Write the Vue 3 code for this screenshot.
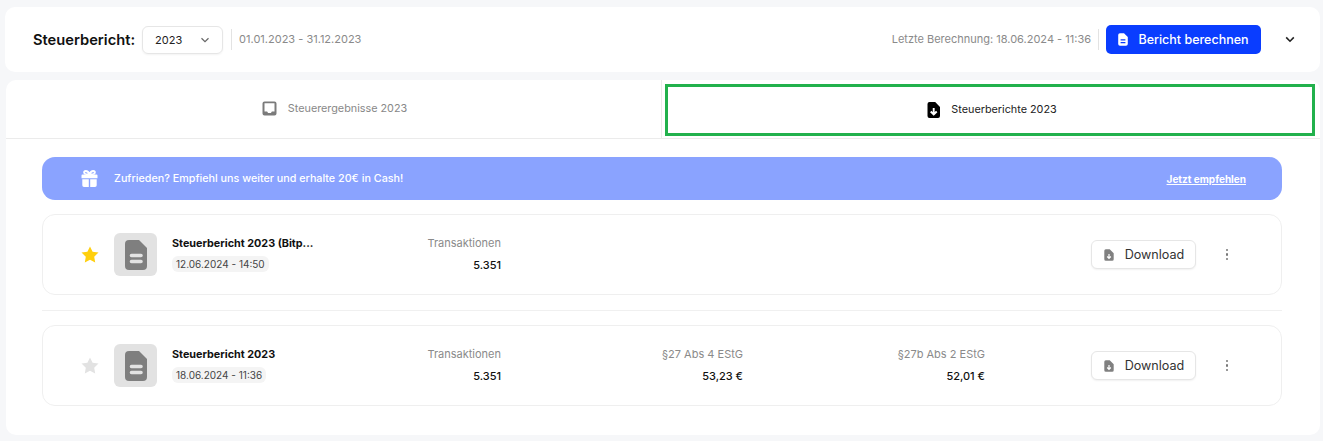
<template>
  <div class="page">
    <header class="topbar">
      <div class="topbar__left">
        <span class="topbar__title">Steuerbericht:</span>
        <div class="year-select">
          <span>2023</span>
          <svg width="10" height="6" viewBox="0 0 10 6"><path d="M1.500 1.200 5 4.600l3.500-3.400" fill="none" stroke="#666" stroke-width="1.200" /></svg>
        </div>
        <span class="topbar__sep"></span>
        <span class="topbar__range">01.01.2023 - 31.12.2023</span>
      </div>
      <div class="topbar__right">
        <span class="topbar__range">Letzte Berechnung: 18.06.2024 - 11:36</span>
        <span class="topbar__sep topbar__sep--right"></span>
        <button class="btn-primary">
          <svg width="10" height="13" viewBox="0 0 10 13"><path d="M2 .2h4L9.800 4v7a1.800 1.800 0 0 1-1.800 1.800H2A1.800 1.800 0 0 1 .2 11V2A1.800 1.800 0 0 1 2 .2Z" fill="#fff" /><path d="M2.600 6.800h4.800M2.600 9.600h4.800" stroke="#0a3dff" stroke-width="1.200" /></svg>
          Bericht berechnen
        </button>
        <svg class="topbar__caret" width="10" height="7" viewBox="0 0 10 7"><path d="M1.200 1.400 5 5.200l3.800-3.800" fill="none" stroke="#222" stroke-width="1.600" /></svg>
      </div>
    </header>

    <main class="panel">
      <nav class="tabs">
        <div class="tab">
          <svg width="15" height="15" viewBox="0 0 15 15"><path fill-rule="evenodd" d="M2.500.5h10a2 2 0 0 1 2 2v10a2 2 0 0 1-2 2h-10a2 2 0 0 1-2-2v-10a2 2 0 0 1 2-2Zm0 1.700v8.300h2.600l1 1.600h2.800l1-1.600h2.600V2.200Z" fill="#7b7b7b" /></svg>
          <span>Steuerergebnisse 2023</span>
        </div>
        <div class="tab tab--active">
          <svg width="13" height="16" viewBox="0 0 13 16"><path d="M2.500 0h5.700L13 5v9a2 2 0 0 1-2 2H2.500a2 2 0 0 1-2-2V2a2 2 0 0 1 2-2Z" fill="#000" /><path d="M6.700 6v6.500M3.700 9.500l3 3 3-3" fill="none" stroke="#fff" stroke-width="1.900" /></svg>
          <span>Steuerberichte 2023</span>
        </div>
      </nav>

      <section class="content">
        <div class="banner">
          <div class="banner__msg">
            <svg width="17" height="17" viewBox="0 0 17 17" fill="#fff"><path d="M.5 5.500a1 1 0 0 1 1-1h14a1 1 0 0 1 1 1v2.800H.5ZM1.300 9.200h6.500V17H3a1.700 1.700 0 0 1-1.700-1.700ZM9.200 9.200h6.500v6.100A1.700 1.700 0 0 1 14 17H9.200Z" /><path d="M8.500 4.500C7.500 1.800 6 1 4.800 1 3.400 1 2.900 2 3.300 3c.4 1 2 1.500 5.200 1.500Zm0 0c1-2.700 2.500-3.500 3.700-3.500 1.400 0 1.900 1 1.500 2-.4 1-2 1.500-5.200 1.500Z" fill="none" stroke="#fff" stroke-width="2" /></svg>
            <span>Zufrieden? Empfiehl uns weiter und erhalte 20€ in Cash!</span>
          </div>
          <a class="banner__link">Jetzt empfehlen</a>
        </div>

        <template v-for="(report, i) in reports" :key="report.date">
          <hr v-if="i > 0" class="divider" />
          <article class="report">
            <svg class="star" width="18" height="17" viewBox="0 0 18 17"><path d="M9 .5l2.600 5.300 5.900.8-4.300 4.100 1 5.800L9 13.800l-5.200 2.700 1-5.800L.5 6.600l5.900-.8Z" :fill="report.starred ? '#ffcf0d' : '#e2e2e2'" stroke-linejoin="round" /></svg>
            <div class="thumb">
              <svg width="22" height="30" viewBox="0 0 22 30"><path d="M4 0h10l8 8v18a4 4 0 0 1-4 4H4a4 4 0 0 1-4-4V4a4 4 0 0 1 4-4Z" fill="#7f7f7f" /><path d="M6.500 15.500h9.500M6.500 21.500h9.500" stroke="#e2e2e2" stroke-width="3.600" stroke-linecap="round" /></svg>
            </div>
            <div class="report__main">
              <div class="report__name">{{ report.name }}</div>
              <span class="report__date">{{ report.date }}</span>
            </div>
            <div class="stat stat--first">
              <div class="stat__label">Transaktionen</div>
              <div class="stat__value">5.351</div>
            </div>
            <div class="stat stat--other">
              <template v-if="report.abs4">
                <div class="stat__label">§27 Abs 4 EStG</div>
                <div class="stat__value">{{ report.abs4 }}</div>
              </template>
            </div>
            <div class="stat stat--other">
              <template v-if="report.abs2">
                <div class="stat__label">§27b Abs 2 EStG</div>
                <div class="stat__value">{{ report.abs2 }}</div>
              </template>
            </div>
            <button class="btn-download">
              <svg width="10" height="12" viewBox="0 0 10 12"><path d="M1.800.3h3.900L9.700 4.300v6a1.500 1.500 0 0 1-1.500 1.500H1.800A1.500 1.500 0 0 1 .3 10.300V1.800A1.500 1.500 0 0 1 1.800.3Z" fill="#808080" /><path d="M5 5v4.200M3.200 7.500 5 9.300l1.800-1.800" fill="none" stroke="#fff" stroke-width="1.200" /></svg>
              <span>Download</span>
            </button>
            <div class="dots"><i></i><i></i><i></i></div>
          </article>
        </template>
      </section>
    </main>
  </div>
</template>

<script setup>
const reports = [
  { name: 'Steuerbericht 2023 (Bitp...', date: '12.06.2024 - 14:50', starred: true },
  { name: 'Steuerbericht 2023', date: '18.06.2024 - 11:36', starred: false, abs4: '53,23 €', abs2: '52,01 €' },
]
</script>

<style>
html, body {
  margin: 0;
  background: #f6f7f9;
}
</style>

<style scoped>
.page {
  height: 441px;
  box-sizing: border-box;
  padding: 7px 3px 6px 5px;
  font-family: Inter, "Liberation Sans", sans-serif;
  overflow: hidden;
}

.topbar {
  height: 65px;
  box-sizing: border-box;
  background: #fff;
  border-radius: 10px;
  padding: 0 25px 0 28px;
  display: flex;
  align-items: center;
  justify-content: space-between;
}
.topbar__left, .topbar__right {
  display: flex;
  align-items: center;
}
.topbar__title {
  font-size: 14.700px;
  font-weight: 600;
  color: #111;
  margin-top: 1px;
}
.year-select {
  width: 81px;
  height: 28px;
  box-sizing: border-box;
  margin-left: 7px;
  padding: 0 12px;
  border: 1px solid #e6e6e6;
  border-radius: 6px;
  display: flex;
  align-items: center;
  justify-content: space-between;
  font-size: 11px;
  color: #222;
  box-shadow: 0 1px 2px rgba(0, 0, 0, .05);
}
.topbar__sep {
  width: 1px;
  height: 21px;
  background: #e3e3e3;
  margin: 0 7px 0 8px;
}
.topbar__sep--right {
  margin: 0 7px;
}
.topbar__range {
  font-size: 11px;
  color: #8a8a8a;
  position: relative;
  top: -1px;
}
.btn-primary {
  width: 155px;
  height: 29px;
  border: 0;
  border-radius: 5px;
  background: #0a3dff;
  color: #fff;
  font: 500 12.500px Inter, "Liberation Sans", sans-serif;
  display: flex;
  align-items: center;
  justify-content: center;
  gap: 10px;
  padding: 0;
}
.topbar__caret {
  margin-left: 24px;
}

.panel {
  margin: 8px 0 0 1px;
  height: 355px;
  background: #fff;
  border-radius: 10px;
  overflow: hidden;
}
.tabs {
  display: grid;
  grid-template-columns: 656px 1fr;
  height: 59px;
  box-sizing: border-box;
  border-bottom: 1px solid #ebebeb;
}
.tab {
  display: flex;
  align-items: center;
  justify-content: center;
  gap: 11px;
  font-size: 10.800px;
  color: #888;
  border-right: 1px solid #ebebeb;
  padding: 0 0 2px 2px;
}
.tab--active {
  color: #222;
  border: 3px solid #22b14c;
  margin: 4px 5px 2px 3px;
  padding: 0 0 1px 4px;
}

.content {
  padding: 18px 38px 0 36px;
}
.banner {
  height: 43px;
  background: #8aa3ff;
  border-radius: 13px;
  display: flex;
  align-items: center;
  justify-content: space-between;
  padding: 0 36px 0 39px;
  color: #fff;
}
.banner__msg {
  display: flex;
  align-items: center;
  gap: 16px;
  font-size: 10.750px;
  font-weight: 500;
}
.banner__msg span {
  margin-bottom: 1px;
}
.banner__link {
  font-size: 10px;
  font-weight: 700;
  text-decoration: underline;
}

.divider {
  border: 0;
  border-top: 1px solid #f0f0f0;
  margin: 15px 0 14px;
}
.report {
  margin-top: 14px;
  height: 81px;
  box-sizing: border-box;
  border: 1px solid #efefef;
  border-radius: 13px;
  display: flex;
  align-items: center;
  padding-left: 38px;
}
.divider + .report {
  margin-top: 0;
}
.star {
  flex: none;
}
.thumb {
  flex: none;
  width: 43px;
  height: 43px;
  margin-left: 15px;
  border-radius: 6px;
  background: #e2e2e2;
  display: flex;
  align-items: center;
  justify-content: center;
}
.report__main {
  width: 240px;
  margin-left: 15px;
}
.report__name {
  font-size: 10.800px;
  font-weight: 700;
  color: #111;
  margin-bottom: 2px;
}
.report__date {
  display: inline-block;
  padding: 2px 4px;
  background: #f4f4f4;
  border-radius: 6px;
  font-size: 10px;
  color: #444;
}
.stat {
  box-sizing: border-box;
  text-align: right;
  height: 38px;
  flex: none;
}
.stat--first { width: 89px; }
.stat--other { width: 242px; }
.stat__label {
  font-size: 11px;
  color: #8a8a8a;
  margin-bottom: 8px;
}
.stat__value {
  font-size: 11px;
  font-weight: 500;
  color: #111;
}
.btn-download {
  flex: none;
  width: 105px;
  height: 29px;
  margin-left: 106px;
  border: 1px solid #e6e6e6;
  border-radius: 6px;
  background: #fff;
  box-shadow: 0 1px 2px rgba(0, 0, 0, .06);
  display: flex;
  align-items: center;
  justify-content: center;
  gap: 11px;
  padding: 0 0 0 1px;
  font: 400 12.600px Inter, "Liberation Sans", sans-serif;
  color: #333;
}
.btn-download span {
  margin-bottom: 1px;
}
.dots {
  margin-left: 29.500px;
  display: flex;
  flex-direction: column;
  gap: 2px;
}
.dots i {
  width: 2.500px;
  height: 2.500px;
  border-radius: 50%;
  background: #777;
}
</style>
